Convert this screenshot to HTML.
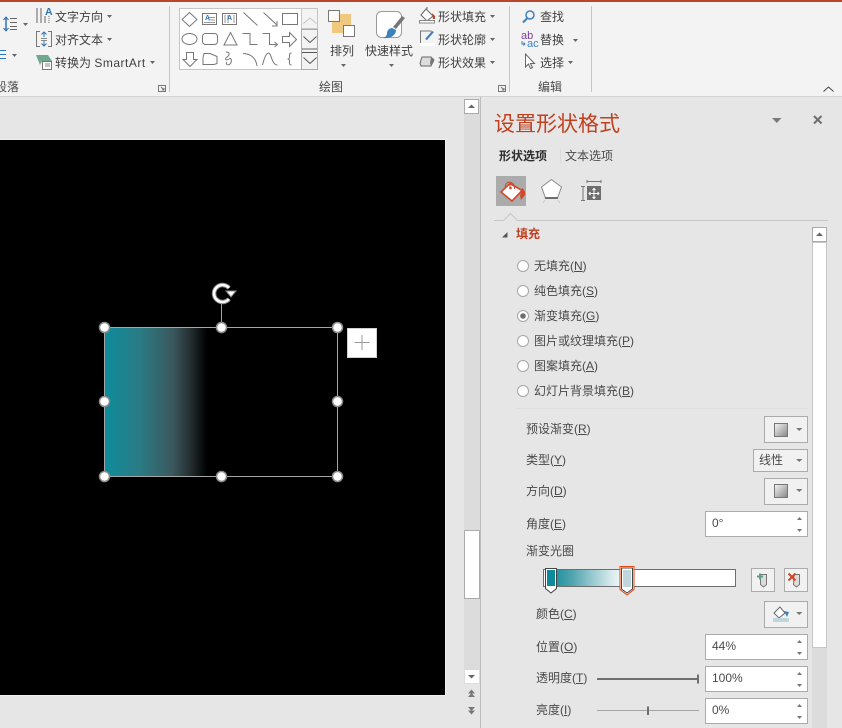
<!DOCTYPE html>
<html>
<head>
<meta charset="utf-8">
<style>
html,body{margin:0;padding:0;width:842px;height:728px;overflow:hidden;background:#e6e6e6}
body{position:relative;font-family:"Liberation Sans","Noto Sans CJK SC",sans-serif;font-size:12px;color:#4a4a4a}
.a{position:absolute;box-sizing:border-box}
.t{position:absolute;white-space:nowrap;line-height:16px;height:16px;font-size:12px;color:#4a4a4a}
.d{color:#404040}
.b{position:absolute;box-sizing:border-box;background:#fff;border:1px solid #ababab}
svg{position:absolute;left:0;top:0}
u{text-underline-offset:1px}
</style>
</head>
<body>
<div class="a" style="left:0;top:0;width:842px;height:96px;background:#f3f3f3"></div>
<div class="a" style="left:0;top:0;width:842px;height:2px;background:#b7472a"></div>
<div class="a" style="left:0;top:96px;width:842px;height:1px;background:#d2d2d2"></div>
<div class="a" style="left:169px;top:6px;width:1px;height:86px;background:#c6c6c6"></div>
<div class="a" style="left:509px;top:6px;width:1px;height:86px;background:#c6c6c6"></div>
<div class="a" style="left:591px;top:6px;width:1px;height:86px;background:#c6c6c6"></div>

<!-- ribbon text -->
<div class="t d" style="left:55px;top:9px">文字方向</div>
<div class="t d" style="left:55px;top:32px">对齐文本</div>
<div class="t d" style="left:55px;top:55px">转换为 <span style="letter-spacing:.5px">SmartArt</span></div>
<div class="t" style="left:-5px;top:79px">段落</div>
<div class="t" style="left:319px;top:79px">绘图</div>
<div class="t" style="left:538px;top:79px">编辑</div>
<div class="t d" style="left:330px;top:43px">排列</div>
<div class="t d" style="left:365px;top:43px">快速样式</div>
<div class="t d" style="left:438px;top:9px">形状填充</div>
<div class="t d" style="left:438px;top:32px">形状轮廓</div>
<div class="t d" style="left:438px;top:55px">形状效果</div>
<div class="t d" style="left:540px;top:9px">查找</div>
<div class="t d" style="left:540px;top:32px">替换</div>
<div class="t d" style="left:540px;top:55px">选择</div>

<!-- gallery -->
<div class="a" style="left:179px;top:8px;width:123px;height:62px;background:#fff;border:1px solid #c6c6c6"></div>
<div class="a" style="left:301px;top:8px;width:17px;height:21px;background:#f3f3f3;border:1px solid #c6c6c6"></div>
<div class="a" style="left:301px;top:29px;width:17px;height:20px;background:#f3f3f3;border:1px solid #ababab"></div>
<div class="a" style="left:301px;top:49px;width:17px;height:21px;background:#f3f3f3;border:1px solid #ababab"></div>

<!-- canvas -->
<div class="a" style="left:0;top:139px;width:446px;height:557px;background:#fff;opacity:.45"></div>
<div class="a" style="left:0;top:140px;width:445px;height:555px;background:#000"></div>
<div class="a" style="left:105px;top:328px;width:102px;height:148px;background:linear-gradient(90deg,#0e8c9b 0%,#2b7b85 34%,#3a595e 66%,#263033 83%,#000 100%)"></div>

<!-- slide scrollbar -->
<div class="a" style="left:464px;top:99px;width:16px;height:570px;background:#dcdcdc"></div>
<div class="b" style="left:464px;top:99px;width:15px;height:15px"></div>
<div class="b" style="left:464px;top:530px;width:16px;height:69px"></div>
<div class="b" style="left:464px;top:669px;width:16px;height:15px;border-color:#dcdcdc"></div>

<!-- panel -->
<div class="a" style="left:480px;top:97px;width:362px;height:631px;background:#e6e6e6;border-left:1px solid #bdbdbd"></div>
<div class="t" style="left:494px;top:110px;font-size:21px;line-height:30px;height:30px;color:#c2401f">设置形状格式</div>
<div class="t" style="left:499px;top:148px;font-weight:bold;color:#2e2e2e">形状选项</div>
<div class="a" style="left:560px;top:149px;width:1px;height:14px;background:#dcdcdc"></div>
<div class="t" style="left:565px;top:148px">文本选项</div>
<div class="a" style="left:496px;top:176px;width:30px;height:30px;background:#ababab"></div>
<div class="t" style="left:516px;top:226px;font-weight:bold;color:#c2401f">填充</div>

<div class="a" style="left:812px;top:227px;width:15px;height:501px;background:#dcdcdc"></div>
<div class="b" style="left:812px;top:227px;width:15px;height:15px"></div>
<div class="b" style="left:812px;top:242px;width:15px;height:406px;border-color:#c6c6c6"></div>

<div class="t" style="left:534px;top:258px">无填充(<u>N</u>)</div>
<div class="t" style="left:534px;top:283px">纯色填充(<u>S</u>)</div>
<div class="t" style="left:534px;top:308px">渐变填充(<u>G</u>)</div>
<div class="t" style="left:534px;top:333px">图片或纹理填充(<u>P</u>)</div>
<div class="t" style="left:534px;top:358px">图案填充(<u>A</u>)</div>
<div class="t" style="left:534px;top:383px">幻灯片背景填充(<u>B</u>)</div>
<div class="a" style="left:516px;top:408px;width:292px;height:1px;background:#dedede"></div>

<div class="t" style="left:526px;top:421px">预设渐变(<u>R</u>)</div>
<div class="t" style="left:526px;top:452px">类型(<u>Y</u>)</div>
<div class="t" style="left:526px;top:483px">方向(<u>D</u>)</div>
<div class="t" style="left:526px;top:516px">角度(<u>E</u>)</div>
<div class="t" style="left:526px;top:543px">渐变光圈</div>
<div class="t" style="left:536px;top:606px">颜色(<u>C</u>)</div>
<div class="t" style="left:536px;top:639px">位置(<u>O</u>)</div>
<div class="t" style="left:536px;top:670px">透明度(<u>T</u>)</div>
<div class="t" style="left:536px;top:702px">亮度(<u>I</u>)</div>

<div class="a" style="left:764px;top:416px;width:44px;height:27px;background:#f1f1f1;border:1px solid #ababab"></div>
<div class="a" style="left:753px;top:449px;width:55px;height:23px;background:#f1f1f1;border:1px solid #ababab"></div>
<div class="t" style="left:759px;top:452px">线性</div>
<div class="a" style="left:764px;top:478px;width:44px;height:27px;background:#f1f1f1;border:1px solid #ababab"></div>
<div class="a" style="left:774px;top:423px;width:14px;height:14px;border:1px solid #777;background:linear-gradient(135deg,#f2f2f2,#8a8a8a)"></div>
<div class="a" style="left:774px;top:484px;width:14px;height:14px;border:1px solid #777;background:linear-gradient(135deg,#f2f2f2,#8a8a8a)"></div>

<div class="b" style="left:705px;top:511px;width:103px;height:26px"></div>
<div class="b" style="left:705px;top:634px;width:103px;height:26px"></div>
<div class="b" style="left:705px;top:666px;width:103px;height:26px"></div>
<div class="b" style="left:705px;top:698px;width:103px;height:26px"></div>
<div class="t" style="left:712px;top:515px">0°</div>
<div class="t" style="left:712px;top:638px">44%</div>
<div class="t" style="left:712px;top:670px">100%</div>
<div class="t" style="left:712px;top:702px">0%</div>

<!-- gradient bar -->
<div class="a" style="left:543px;top:569px;width:193px;height:18px;background:#fff;border:1px solid #6e6e6e"></div>
<div class="a" style="left:548px;top:570px;width:76px;height:16px;background:linear-gradient(90deg,#0e8b9a 0%,#4da2ad 30%,#9acbd1 60%,#dcecee 85%,#f6fafa 100%)"></div>

<div class="a" style="left:751px;top:568px;width:24px;height:24px;background:#f1f1f1;border:1px solid #ababab"></div>
<div class="a" style="left:784px;top:568px;width:24px;height:24px;background:#f1f1f1;border:1px solid #ababab"></div>
<div class="a" style="left:764px;top:601px;width:44px;height:27px;background:#f1f1f1;border:1px solid #ababab"></div>

<svg width="842" height="728" viewBox="0 0 842 728" fill="none">
<!-- small ribbon dropdown arrows -->
<g fill="#666">
<path d="M23 23h5l-2.500 3zM12 54h5l-2.500 3zM107 15h5l-2.500 3zM107 38h5l-2.500 3zM150 61h5l-2.500 3zM341 64h5l-2.500 3zM389 64h5l-2.500 3zM490 15h5l-2.500 3zM490 38h5l-2.500 3zM490 61h5l-2.500 3zM573 39h5l-2.500 3zM568 61h5l-2.500 3z"/>
</g>
<!-- line spacing icon -->
<path d="M6 17v14" stroke="#2e75b6" stroke-width="1.500"/>
<path d="M3.500 20l2.500-3 2.500 3M3.500 28l2.500 3 2.500-3" stroke="#2e75b6"/>
<path d="M10 18.500h7M10 22.500h7M10 26.500h7M10 29.500h7" stroke="#666"/>
<path d="M0 50.500h6M0 54.500h6M0 58.500h6" stroke="#2e75b6"/>
<!-- text direction -->
<path d="M37 8v15M41 8v15M45 16v7" stroke="#666"/>
<path d="M49 16v7" stroke="#666" stroke-dasharray="1 1"/>
<text x="45" y="15" font-size="10.500" font-weight="bold" fill="#2e75b6" font-family="Liberation Sans">A</text>
<!-- align text -->
<path d="M40 31.500h-3.500v15h3.500M48 31.500h3.500v15h-3.500" stroke="#777"/>
<path d="M44 32v5M44 41v5" stroke="#2e75b6"/>
<path d="M41.500 34.500l2.500-2.500 2.500 2.500M41.500 43.500l2.500 2.500 2.500-2.500" stroke="#2e75b6"/>
<path d="M41 38.500h6M41 40.500h6" stroke="#888"/>
<!-- smartart -->
<path d="M36 55h12l4 6H42l-2 4z" fill="#6fa88f"/>
<rect x="42.500" y="61.500" width="9" height="8" fill="#fff" stroke="#777"/>
<path d="M45 64h5M45 66h5" stroke="#888"/>
<!-- launchers -->
<g stroke="#777"><path d="M158.500 85.500h7v6h-7z" fill="#f3f3f3"/><path d="M161 87l3 3M164 88v2h-2"/>
<path d="M498.500 85.500h7v6h-7z" fill="#f3f3f3"/><path d="M501 87l3 3M504 88v2h-2"/></g>

<!-- gallery shapes -->
<g stroke="#777" fill="none">
<path d="M189.500 12.500l7.500 7-7.500 7-7.500-7z"/>
<rect x="202.500" y="13.500" width="14" height="11"/>
<path d="M208.500 20h6.500M208.500 17.500h6.500M204 22.500h11" stroke="#999"/>
<rect x="222.500" y="13.500" width="14" height="11"/>
<path d="M225 15v8M228 15v8M234 15v8" stroke="#999"/>
<path d="M243.500 12.500l14 13M263.500 12.500l14 13"/>
<path d="M277 21v5h-5"/>
<rect x="282.500" y="13.500" width="15" height="11"/>
<ellipse cx="189.500" cy="39" rx="7.500" ry="5.500"/>
<rect x="202.500" y="33.500" width="15" height="11" rx="3"/>
<path d="M230.500 32.500l6.500 12.500h-13z"/>
<path d="M242.500 33.500h7.500v11h7.500"/>
<path d="M262.500 33.500h7v11h7M274.500 42l3 2.500-3 2.500"/>
<path d="M282.500 36.500h7v-4l7 7-7 7v-4h-7z"/>
<path d="M186.500 52.500h7v7h3.500l-7 7-7-7h3.500z"/>
<path d="M204 53.500h6l7 3v7l-3 1h-11v-7z"/>
<path d="M226 52c4 0 4 3 1 5s-1 4 2 2 3 3 1 5-5 0-3-2"/>
<path d="M243 53.500c8 0 13 5 14 12.500"/>
<path d="M262.500 65c2-8 4-12 6-12 3 0 3 12 9 12"/>
<path d="M291.500 53c-2 0-2 1-2 3s0 3-2 3c2 0 2 1 2 3s0 3 2 3"/>
<path d="M303.500 23.500l6.500-5.500 6.500 5.500" stroke="#c6c6c6"/>
<path d="M303.500 36.500l6.500 6 6.500-6" stroke="#555"/>
<path d="M302 52.500h15" stroke="#555"/>
<path d="M303.500 57.500l6.500 6 6.500-6" stroke="#555"/>
</g>
<text x="205" y="20" font-size="7" font-weight="bold" fill="#2e75b6" font-family="Liberation Sans">A</text>
<text x="227" y="20" font-size="7" font-weight="bold" fill="#2e75b6" font-family="Liberation Sans">A</text>

<!-- arrange -->
<rect x="332" y="14" width="19" height="19" fill="#f0c87f"/>
<rect x="343.500" y="25.500" width="11" height="11" fill="#fff" stroke="#777"/>
<rect x="328.500" y="10.500" width="11" height="11" fill="#fff" fill-opacity=".9" stroke="#777"/>
<!-- quick styles -->
<rect x="376.500" y="11.500" width="25" height="26" rx="5" fill="#fff" stroke="#9a9a9a"/>
<path d="M405 18l-9 11-3-2 9-11z" fill="#777"/>
<path d="M392 28l4 2c0 5-5 9-13 8 3-1 4-3 4-5 0-3 3-5 5-5z" fill="#3f81bd"/>
<!-- shape fill -->
<path d="M426 9l-5 6 6 6 6-5z" fill="#fff" stroke="#666"/>
<path d="M427 9V7" stroke="#666"/>
<path d="M432 13l3 3v3h-2z" fill="#b7472a"/>
<rect x="419.500" y="20.500" width="15" height="2.500" fill="#fff" stroke="#888"/>
<!-- outline -->
<path d="M420.500 43v-12h11" stroke="#777"/>
<path d="M434 32l-7 8-2-1 7-8z" fill="#3f81bd"/>
<rect x="419" y="43" width="16" height="3" fill="#fff"/>
<!-- effects -->
<path d="M422 57h9l3 3-3 6h-10l-1-3z" fill="#dcdcdc" stroke="#666"/>
<path d="M431 57l3 3-3 6-1-3z" fill="#777"/>
<!-- find -->
<circle cx="530" cy="15" r="4" stroke="#3f81bd" stroke-width="1.500"/>
<path d="M527 18.500l-4 4" stroke="#3f81bd" stroke-width="2"/>
<!-- replace -->
<text x="521" y="39" font-size="11" fill="#7a3f9d" font-family="Liberation Sans">ab</text>
<text x="527" y="47" font-size="11" fill="#3f81bd" font-family="Liberation Sans">ac</text>
<path d="M522 41v3h3M523.500 42.500l1.500 1.500-1.500 1.500" stroke="#3f81bd"/>
<!-- select -->
<path d="M525.500 54v13l3-3 2 4.500 2-1-2-4h4z" fill="#fff" stroke="#666"/>
<!-- collapse -->
<path d="M823.500 91.500l5-4.500 5 4.500" stroke="#444"/>

<!-- slide scroll arrows -->
<path d="M468 108h7l-3.500-3.500zM468 675h7l-3.500 3.500z" fill="#666"/>
<path d="M468 693.500h7l-3.500-4zM468 697h7l-3.500-4zM468 707h7l-3.500 4zM468 710.500h7l-3.500 4z" fill="#777"/>

<!-- shape selection -->
<path d="M221.500 303v24" stroke="#a6a6a6"/>
<rect x="104.500" y="327.500" width="233" height="149" stroke="#a6a6a6"/>
<g fill="#fff" stroke="#8a8a8a" stroke-width="1.500">
<circle cx="104.500" cy="327.500" r="5"/><circle cx="221.500" cy="327.500" r="5"/><circle cx="337.500" cy="327.500" r="5"/>
<circle cx="104.500" cy="401.500" r="5"/><circle cx="337.500" cy="401.500" r="5"/>
<circle cx="104.500" cy="476.500" r="5"/><circle cx="221.500" cy="476.500" r="5"/><circle cx="337.500" cy="476.500" r="5"/>
</g>
<!-- rotate -->
<path d="M229 299a8.500 8.500 0 1 1 0-11" stroke="#8a8a8a" stroke-width="4.500"/>
<path d="M229 299a8.500 8.500 0 1 1 0-11" stroke="#fff" stroke-width="2.500"/>
<path d="M226 291h10l-5 6z" fill="#fff" stroke="#8a8a8a"/>
<!-- plus -->
<rect x="347.500" y="328.500" width="29" height="29" fill="#fff" stroke="#d0d0d0"/>
<path d="M362 335v15M354.500 342.500h15" stroke="#9a9a9a"/>

<!-- panel header icons -->
<path d="M772 118h9.500l-4.750 5z" fill="#7a7a7a"/>
<path d="M814 116l7.500 7.500M821.500 116l-7.500 7.500" stroke="#6e6e6e" stroke-width="2"/>
<!-- fill icon -->
<path d="M510 183.500l12 7-10 10.500-11-9z" fill="#fff" stroke="#d24726" stroke-width="1.600"/>
<path d="M505.500 187c-1-6 8-7 9 0v2" stroke="#d24726"/>
<path d="M510 184v4" stroke="#d24726"/>
<circle cx="510.500" cy="188" r="1.300" fill="#d24726"/>
<path d="M522 188c3 2 3.500 5 3 7l-4 5-1-4z" fill="#d24726"/>
<!-- pentagon icon -->
<path d="M551.500 179.500l10 7.500-4 11h-12l-4-11z" fill="#fff" stroke="#8a8a8a"/>
<path d="M545 198h13" stroke="#6e6e6e" stroke-width="2"/>
<path d="M545 200l-2 3M558 200l2 3" stroke="#ccc"/>
<!-- size icon -->
<path d="M587 181.500h14M587 180v3M601 180v3M581 186.500h4M581 200.500h4M583 186.500v14" stroke="#777"/>
<rect x="587" y="186" width="14" height="14" fill="#6e6e6e"/>
<path d="M594 188.500v10M589 193.500h10" stroke="#fff"/>
<path d="M592.500 190l1.500-1.500 1.500 1.500M592.500 197l1.500 1.500 1.500-1.500M590.500 192l-1.500 1.500 1.500 1.500M597.500 192l1.500 1.500-1.500 1.500" stroke="#fff"/>
<!-- divider with notch -->
<path d="M494 220.500h9.500l7-7 7 7h310.500" stroke="#c6c6c6" fill="#e6e6e6"/>
<path d="M502 237.500h5.500v-5.500z" fill="#555"/>
<path d="M816 236h7l-3.500-3.500z" fill="#666"/>
<!-- radios -->
<g fill="#fff" stroke="#a6a6a6">
<circle cx="523" cy="266" r="5.500"/><circle cx="523" cy="291" r="5.500"/><circle cx="523" cy="316" r="5.500"/>
<circle cx="523" cy="341" r="5.500"/><circle cx="523" cy="366" r="5.500"/><circle cx="523" cy="391" r="5.500"/>
</g>
<circle cx="523" cy="316" r="2.800" fill="#6e6e6e"/>
<!-- combos -->
<path d="M796 428h6.500l-3.250 3zM796 459h6.500l-3.250 3zM796 489h6.500l-3.250 3zM796 612h6.500l-3.250 3z" fill="#777"/>
<!-- spinners -->
<path d="M797 520l2.500-3 2.500 3zM797 529l2.500 3 2.500-3zM797 643l2.500-3 2.500 3zM797 652l2.500 3 2.500-3zM797 675l2.500-3 2.500 3zM797 684l2.500 3 2.500-3zM797 707l2.500-3 2.500 3zM797 716l2.500 3 2.500-3z" fill="#777"/>
<!-- gradient stops -->
<path d="M545.500 568.500h11v20l-5.500 4.500-5.500-4.500z" fill="#fff" stroke="#444"/>
<rect x="547" y="570" width="8" height="16" fill="#0e8b9a"/>
<path d="M620 566.500h14v23l-7 5.500-7-5.500z" fill="#fff" stroke="#e0480e"/>
<path d="M621.500 568h11v21l-5.500 4-5.500-4z" fill="#fff" stroke="#444"/>
<rect x="623" y="570" width="8" height="17" fill="#bfd6dc"/>
<!-- add/remove -->
<path d="M760.500 574.500h6v10l-3 2.500-3-2.500z" fill="#dcdcdc" stroke="#777"/>
<path d="M757 576.500h6M760 573.500v6" stroke="#5d9e83" stroke-width="2"/>
<path d="M794 574.500h5.500v10l-3 2.500-3-2.500z" fill="#dcdcdc" stroke="#777"/>
<path d="M788.500 573.500l7 7M795.500 573.500l-7 7" stroke="#d24726" stroke-width="2"/>
<!-- colour fill btn -->
<path d="M780 607l-6 6 5 5 6-5z" fill="#fff" stroke="#666"/>
<path d="M784 611l5 1-2 5z" fill="#3f81bd"/>
<rect x="773" y="618" width="16" height="4" fill="#bfd6dc"/>
<!-- sliders -->
<path d="M597 679h101" stroke="#6e6e6e" stroke-width="2"/>
<path d="M698 674.500v9" stroke="#6e6e6e" stroke-width="2"/>
<path d="M597 710.500h102" stroke="#a6a6a6"/>
<path d="M648 706.500v8.500" stroke="#6e6e6e" stroke-width="2"/>
</svg>
</body>
</html>
